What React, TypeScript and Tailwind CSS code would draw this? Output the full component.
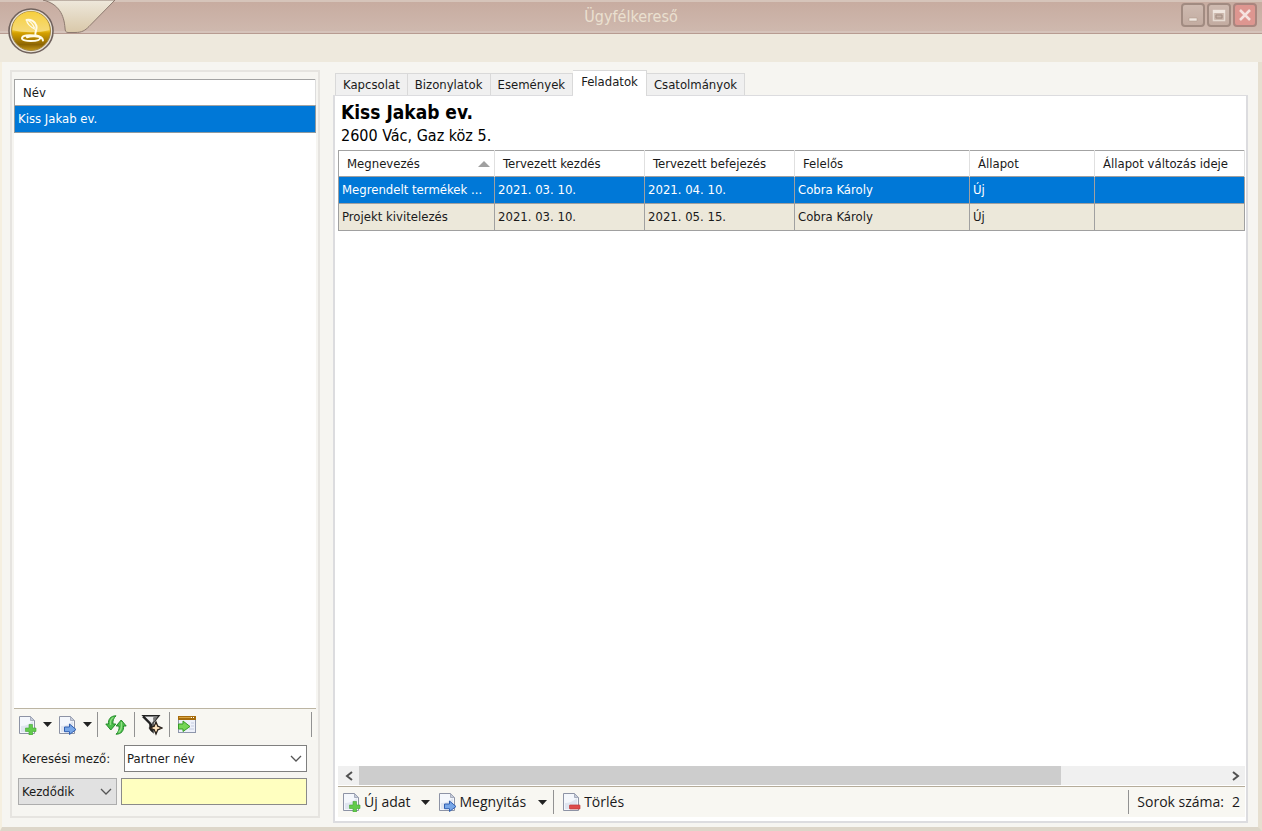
import { useState } from "react";
import type { ReactNode } from "react";
import clsx from "clsx";

const tabs = ["Kapcsolat", "Bizonylatok", "Események", "Feladatok", "Csatolmányok"];

const columns = [
  { title: "Megnevezés", width: "w-[156px]", sorted: true },
  { title: "Tervezett kezdés", width: "w-[150px]" },
  { title: "Tervezett befejezés", width: "w-[150px]" },
  { title: "Felelős", width: "w-[175px]" },
  { title: "Állapot", width: "w-[125px]" },
  { title: "Állapot változás ideje", width: "w-auto" },
];

const tasks = [
  ["Megrendelt termékek ...", "2021. 03. 10.", "2021. 04. 10.", "Cobra Károly", "Új", ""],
  ["Projekt kivitelezés", "2021. 03. 10.", "2021. 05. 15.", "Cobra Károly", "Új", ""],
];

const Page = ({ children }: { children: ReactNode }) => (
  <svg width="20" height="20" viewBox="0 0 20 20" aria-hidden="true">
    <path d="M1.500 1.500h11l4 4v13h-15z" fill="#f4f7fc" stroke="#8d93a5" />
    <path d="M3 17V11c4 0 9-2 12-5v11z" fill="#dfe5f0" />
    <path d="M12.500 1.500v4h4z" fill="#c5cbd9" stroke="#9ba1b3" strokeWidth=".8" />
    {children}
  </svg>
);

const NewIcon = () => (
  <Page>
    <path d="M11 9.500h3.500V13H18v3.500h-3.500V20H11v-3.500H7.500V13H11z" fill="#62cb4c" stroke="#43a634" strokeWidth=".6" />
  </Page>
);

const OpenIcon = () => (
  <Page>
    <path d="M6.500 12h5V9l6.500 5.500-6.500 5v-2.800h-5z" fill="#78a7e8" stroke="#315fb0" />
  </Page>
);

const DeleteIcon = () => (
  <Page>
    <rect x="7.500" y="13" width="10.500" height="4" rx=".5" fill="#dd4b4b" stroke="#bf3939" strokeWidth=".7" />
  </Page>
);

const RefreshIcon = () => (
  <svg width="22" height="20" viewBox="0 0 22 20" aria-hidden="true">
    <path d="M11 .8C5.500.8 3 4.500 3.500 9H.8l5 6 5-6H8C7.500 6 8.500 3 11 .8z" fill="#4dbe4b" stroke="#238b29" />
    <path d="M11 19.200c5.500 0 8-3.700 7.500-8.200h2.700l-5-6-5 6H14c.5 3-.5 6-3 8.200z" fill="#4dbe4b" stroke="#238b29" />
    <path d="M8.500 2.500C5.500 4 5 7 5.500 10M16.500 7v4c0 3-1 5-3 6.500" fill="none" stroke="#91e083" strokeWidth="1.300" />
  </svg>
);

const FilterIcon = () => (
  <svg width="22" height="22" viewBox="0 0 22 22" aria-hidden="true">
    <path d="M2 1.800h16L12 9v9l-3-3V9z" fill="#dedede" stroke="#222" strokeWidth="1.400" />
    <path d="M1 3h3l7 7v8l-2-2v-5z" fill="#222" />
    <path d="M5 3h10l-4 5z" fill="#f0f0f0" />
    <path d="M12 3.500L17 2l-4.500 7z" fill="#777" />
    <path d="M15 8l1.800 4.200L21 14l-4.200 1.800L15 20l-1.800-4.200L9 14l4.200-1.800z" fill="#f5ca91" stroke="#29221d" strokeWidth="1.300" />
    <path d="M15 11v6M12 14h6" stroke="#fff0d8" />
  </svg>
);

const ExportIcon = () => (
  <svg width="20" height="20" viewBox="0 0 20 20" aria-hidden="true">
    <rect x="1.500" y="1.500" width="17" height="16" fill="#eef1fa" stroke="#8e96ab" />
    <path d="M1 1h18v4H1z" fill="#a66b0b" />
    <path d="M2 2h12v1H2z" fill="#d9a440" />
    <path d="M14 2h1v1h-1zM16 2h1v1h-1z" fill="#fff" />
    <path d="M14 8h3M14 11h3M12 14h5" stroke="#c5cce0" />
    <path d="M1.500 9H6V6l7 5.500-7 5V14H1.500z" fill="#75d657" stroke="#379c27" />
  </svg>
);

const Caret = () => (
  <svg width="9" height="5" viewBox="0 0 9 5" aria-hidden="true">
    <path d="M0 0h9L4.500 5z" fill="#222" />
  </svg>
);

const Chevron = ({ className }: { className?: string }) => (
  <svg width="12" height="7" viewBox="0 0 12 7" className={className} aria-hidden="true">
    <path d="M1 1l5 5 5-5" fill="none" stroke="#555" strokeWidth="1.300" />
  </svg>
);

const Logo = () => (
  <svg width="46" height="46" viewBox="0 0 46 46" aria-hidden="true">
    <defs>
      <linearGradient id="gold" x1="0" y1="0" x2="0" y2="1">
        <stop offset="0" stopColor="#f5cf45" />
        <stop offset=".48" stopColor="#f0c62f" />
        <stop offset=".55" stopColor="#d5a100" />
        <stop offset=".85" stopColor="#8d6503" />
        <stop offset="1" stopColor="#c99b16" />
      </linearGradient>
      <linearGradient id="shine" x1="0" y1="0" x2="0" y2="1">
        <stop offset="0" stopColor="#f6cf3d" />
        <stop offset="1" stopColor="#f6db7c" />
      </linearGradient>
    </defs>
    <circle cx="23" cy="23" r="22" fill="#e9e2d4" stroke="#70625d" strokeWidth="1.600" />
    <circle cx="23" cy="23" r="19.500" fill="url(#gold)" stroke="#a58843" />
    <path d="M4.500 22a18.500 18.500 0 0 1 37 0c-11 3-26 3-37 0z" fill="url(#shine)" />
    <path d="M18.500 12c4-1 9 1.500 10 6 .8 4-2 6-1 9.500" fill="none" stroke="#fffbe8" strokeWidth="2" strokeLinecap="round" />
    <path d="M18.500 12c.5 4 3 6.500 9 9.500M20 12.500c3 1 5 4 6.500 7.500" fill="none" stroke="#fffbe8" strokeWidth="1.300" />
    <path d="M27 27.500c-6-.8-13-.3-13 2.700 0 4 18 3.500 18 0 0-2.200-9-2.500-13-1M28 27.500c4 .5 6.500 2 7 5" fill="none" stroke="#fffbe8" strokeWidth="2" strokeLinecap="round" />
  </svg>
);

const Divider = () => <div className="w-px self-stretch bg-[#929292]" />;

const captionButton =
  "flex size-6 items-center justify-center rounded-sm border-2 border-[#a18b81] bg-linear-to-b from-[#cebab0] to-[#c3aca1]";

const TitleBar = () => (
  <header className="relative h-[62px] shrink-0 bg-[#eee9dd]">
    <div className="flex h-[34px] items-center border-b border-[#b79b91] bg-linear-to-b from-[#c7ab9f] to-[#cfb9af] shadow-[inset_0_2px_0_#d6c4ba,inset_0_-2px_0_#d5c3ba]">
      <div className="w-[81px]" />
      <h1 className="flex-1 text-center text-base text-[#eae0d0]">Ügyfélkereső</h1>
      <div className="flex w-[81px] gap-[2px] pb-1">
        <button className={captionButton} aria-label="Kis méret">
          <svg width="20" height="20" viewBox="0 0 20 20"><path d="M6 13h8v3H6z" fill="#f0e6df" stroke="#a99487" strokeWidth=".5" /></svg>
        </button>
        <button className={captionButton} aria-label="Teljes méret">
          <svg width="20" height="20" viewBox="0 0 20 20">
            <path d="M4.500 5.500h11v10h-11z" fill="none" stroke="#e7dcd3" strokeWidth="1.500" />
            <path d="M4 5h12v3H4z" fill="#f0e6df" />
            <path d="M7 10h6v3H7z" fill="none" stroke="#a08c80" />
          </svg>
        </button>
        <button className="flex size-6 items-center justify-center rounded-sm border-2 border-[#a9857e] bg-[#de9690]" aria-label="Bezárás">
          <svg width="20" height="20" viewBox="0 0 20 20"><path d="M5 5l10 10M15 5L5 15" stroke="#f6e3df" strokeWidth="2.500" /></svg>
        </button>
      </div>
    </div>
    <svg width="118" height="34" viewBox="0 0 118 34" className="absolute top-0 left-0" aria-hidden="true">
      <defs>
        <linearGradient id="flap" x1="0" y1="0" x2="0" y2="1">
          <stop offset="0" stopColor="#eee8dc" />
          <stop offset="1" stopColor="#d9c8a9" />
        </linearGradient>
      </defs>
      <path d="M43 0C59 4 64 15 65 28c0 3 1 4.500 3 4.500h7c7 0 10-2 14-6L115 0z" fill="url(#flap)" stroke="#8d7a70" />
    </svg>
    <button className="absolute top-2 left-2" aria-label="Menü">
      <Logo />
    </button>
  </header>
);

const SearchPanel = () => (
  <aside className="flex w-[310px] shrink-0 flex-col border-2 border-[#e6e4e0] px-[2px] pt-[7px]">
    <div className="flex-1 border-b border-[#bcb5a3] bg-white">
      <table className="w-full table-fixed border-collapse">
        <thead>
          <tr className="h-[26px]">
            <th className="border border-[#a3a3a3] border-r-[#ddd] px-2 text-left font-normal">Név</th>
          </tr>
        </thead>
        <tbody>
          <tr className="h-[27px] bg-[#0078d7] text-white">
            <td className="border border-[#8f9a9f] px-[3px]">Kiss Jakab ev.</td>
          </tr>
        </tbody>
      </table>
    </div>
    <div className="flex h-[31px] items-center bg-[#f8f7f2] py-[3px] pl-1">
      <button aria-label="Új adat"><NewIcon /></button>
      <button className="px-[5px]" aria-label="Új adat menü"><Caret /></button>
      <button className="ml-px" aria-label="Megnyitás"><OpenIcon /></button>
      <button className="px-[5px]" aria-label="Megnyitás menü"><Caret /></button>
      <Divider />
      <button className="px-[7px]" aria-label="Frissítés"><RefreshIcon /></button>
      <Divider />
      <button className="px-[6px]" aria-label="Szűrő"><FilterIcon /></button>
      <Divider />
      <button className="px-[7px]" aria-label="Exportálás"><ExportIcon /></button>
      <div className="mr-1 ml-auto w-px self-stretch bg-[#929292]" />
    </div>
    <div className="flex items-center justify-between pt-[5px] pr-[9px] pl-2">
      <label htmlFor="field">Keresési mező:</label>
      <div className="relative">
        <select id="field" className="h-[27px] w-[183px] appearance-none border border-[#7f7f7f] bg-white px-[2px]">
          <option>Partner név</option>
        </select>
        <Chevron className="pointer-events-none absolute top-[10px] right-[5px]" />
      </div>
    </div>
    <div className="flex gap-1 pt-[6px] pr-[9px] pb-[11px] pl-1">
      <div className="relative">
        <select aria-label="Feltétel" className="h-[27px] w-[99px] appearance-none border border-[#adadad] bg-[#e1e1e1] px-[3px]">
          <option>Kezdődik</option>
        </select>
        <Chevron className="pointer-events-none absolute top-[10px] right-[5px]" />
      </div>
      <input aria-label="Keresett érték" className="h-[27px] min-w-0 flex-1 border border-[#8a8a8a] bg-[#ffffc0] px-1" />
    </div>
  </aside>
);

const TaskTable = () => (
  <table className="w-full table-fixed border-collapse">
    <thead>
      <tr className="h-[26px]">
        {columns.map((col) => (
          <th
            key={col.title}
            className={clsx(
              col.width,
              "border-x border-t border-x-[#e0e0e0] border-t-[#a3a3a3] pr-1 pl-2 text-left font-normal whitespace-nowrap first:border-l-[#a3a3a3]"
            )}
          >
            <div className="flex items-center justify-between">
              {col.title}
              {col.sorted && (
                <svg width="12" height="6" viewBox="0 0 12 6" aria-hidden="true">
                  <path d="M0 6h12L6 0z" fill="#a0a0a0" />
                </svg>
              )}
            </div>
          </th>
        ))}
      </tr>
    </thead>
    <tbody>
      {tasks.map((task, i) => (
        <tr key={task[0]} className={clsx("h-[27px]", i === 0 ? "bg-[#0078d7] text-white" : "bg-[#ece8da]")}>
          {task.map((value, j) => (
            <td key={j} className="border border-[#a0a0a0] pl-[3px] whitespace-nowrap">
              {value}
            </td>
          ))}
        </tr>
      ))}
    </tbody>
  </table>
);

const ScrollBar = () => (
  <div className="flex h-[19px] bg-[#f0f0f0]">
    <button className="flex w-[21px] items-center justify-center" aria-label="Balra">
      <svg width="8" height="10" viewBox="0 0 8 10"><path d="M7 1L2 5l5 4" fill="none" stroke="#505050" strokeWidth="2" /></svg>
    </button>
    <div className="flex-1">
      <div className="h-full w-[81%] bg-[#cdcdcd]" />
    </div>
    <button className="flex w-[19px] items-center justify-center" aria-label="Jobbra">
      <svg width="8" height="10" viewBox="0 0 8 10"><path d="M1 1l5 4-5 4" fill="none" stroke="#505050" strokeWidth="2" /></svg>
    </button>
  </div>
);

const DetailPanel = () => {
  const [active, setActive] = useState("Feladatok");

  return (
    <main className="flex min-w-0 flex-1 flex-col">
      <nav className="flex items-end pl-[2px]" role="tablist">
        {tabs.map((tab) => (
          <button
            key={tab}
            role="tab"
            aria-selected={tab === active}
            onClick={() => setActive(tab)}
            className={clsx(
              "border-t border-r border-[#d9d9d9] first:border-l",
              tab === active ? "relative -mb-px h-[26px] bg-white px-2 pb-1" : "h-[22px] bg-[#f0f0f0] px-[7px]"
            )}
          >
            {tab}
          </button>
        ))}
      </nav>
      <section className="flex flex-1 flex-col border-2 border-t border-[#dcdcdf] bg-white pr-[1px] pb-1 pl-[3px]">
        <div className="h-[54px] pt-1 pl-[3px] text-black">
          <h2 className="text-[19px] leading-6 font-bold">Kiss Jakab ev.</h2>
          <p className="text-base leading-6">2600 Vác, Gaz köz 5.</p>
        </div>
        <div className="flex-1">
          <TaskTable />
        </div>
        <ScrollBar />
        <footer className="mt-px flex h-[31px] items-center border-t border-[#b5ac9a] bg-[#f8f7f2] py-[3px] pl-1 font-['Open_Sans',sans-serif] text-sm">
          <button className="flex items-center gap-[2px]"><NewIcon />Új adat</button>
          <button className="pr-2 pl-[10px]" aria-label="Új adat menü"><Caret /></button>
          <button className="flex items-center gap-[2px]"><OpenIcon />Megnyitás</button>
          <button className="pr-[6px] pl-3" aria-label="Megnyitás menü"><Caret /></button>
          <Divider />
          <button className="ml-2 flex items-center gap-[2px]"><DeleteIcon />Törlés</button>
          <div className="ml-auto w-px self-stretch bg-[#929292]" />
          <span className="flex gap-2 pr-[5px] pl-2">
            <span>Sorok száma:</span>
            <span>2</span>
          </span>
        </footer>
      </section>
    </main>
  );
};

export default function App() {
  return (
    <div className="flex h-screen min-h-[400px] flex-col overflow-hidden bg-[#f6f5f1] font-['DejaVu_Sans_Condensed','DejaVu_Sans',sans-serif] text-[13px] text-[#1a1a1a]">
      <TitleBar />
      <div className="flex min-h-0 flex-1 gap-[13px] border-r-4 border-b-4 border-l-2 border-r-[#e6dfd0] border-b-[#ddd6c9] border-l-[#f5efe0] pt-2 pr-[10px] pb-1 pl-2">
        <div className="flex pb-[5px]">
          <SearchPanel />
        </div>
        <DetailPanel />
      </div>
    </div>
  );
}
